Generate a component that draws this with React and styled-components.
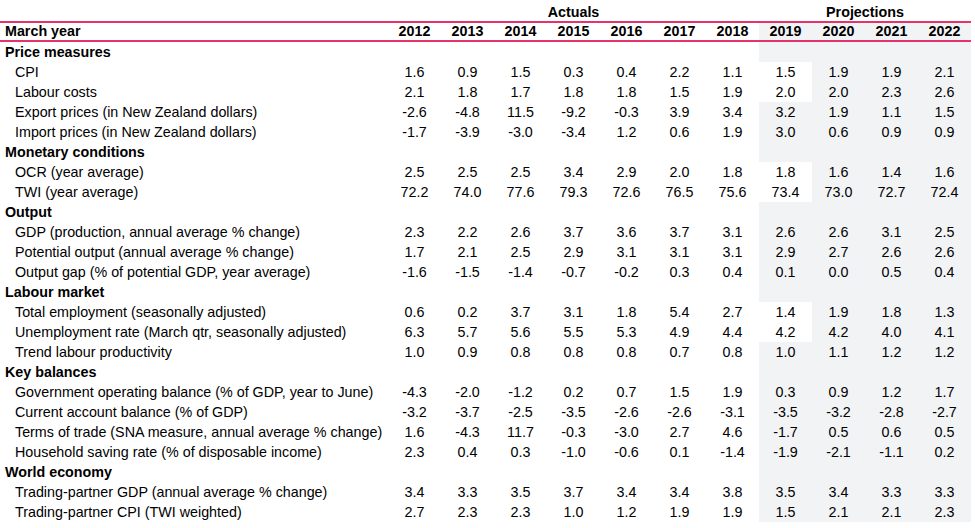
import React from 'react'
import styled, { createGlobalStyle } from 'styled-components'

const GlobalStyle = createGlobalStyle`
  body {
    margin: 0;
    background: #fff;
    color: #000;
    font-family: "Liberation Sans", Arial, sans-serif;
  }
`

const YEARS = [2012, 2013, 2014, 2015, 2016, 2017, 2018, 2019, 2020, 2021, 2022]
const ACTUAL_COUNT = 7

const sections = [
  {
    title: 'Price measures',
    rows: [
      ['CPI', '1.6 0.9 1.5 0.3 0.4 2.2 1.1 1.5 1.9 1.9 2.1', true],
      ['Labour costs', '2.1 1.8 1.7 1.8 1.8 1.5 1.9 2.0 2.0 2.3 2.6', true],
      ['Export prices (in New Zealand dollars)', '-2.6 -4.8 11.5 -9.2 -0.3 3.9 3.4 3.2 1.9 1.1 1.5'],
      ['Import prices (in New Zealand dollars)', '-1.7 -3.9 -3.0 -3.4 1.2 0.6 1.9 3.0 0.6 0.9 0.9'],
    ],
  },
  {
    title: 'Monetary conditions',
    rows: [
      ['OCR (year average)', '2.5 2.5 2.5 3.4 2.9 2.0 1.8 1.8 1.6 1.4 1.6', true],
      ['TWI (year average)', '72.2 74.0 77.6 79.3 72.6 76.5 75.6 73.4 73.0 72.7 72.4', true],
    ],
  },
  {
    title: 'Output',
    rows: [
      ['GDP (production, annual average % change)', '2.3 2.2 2.6 3.7 3.6 3.7 3.1 2.6 2.6 3.1 2.5'],
      ['Potential output (annual average % change)', '1.7 2.1 2.5 2.9 3.1 3.1 3.1 2.9 2.7 2.6 2.6'],
      ['Output gap (% of potential GDP, year average)', '-1.6 -1.5 -1.4 -0.7 -0.2 0.3 0.4 0.1 0.0 0.5 0.4'],
    ],
  },
  {
    title: 'Labour market',
    rows: [
      ['Total employment (seasonally adjusted)', '0.6 0.2 3.7 3.1 1.8 5.4 2.7 1.4 1.9 1.8 1.3', true],
      ['Unemployment rate (March qtr, seasonally adjusted)', '6.3 5.7 5.6 5.5 5.3 4.9 4.4 4.2 4.2 4.0 4.1', true],
      ['Trend labour productivity', '1.0 0.9 0.8 0.8 0.8 0.7 0.8 1.0 1.1 1.2 1.2'],
    ],
  },
  {
    title: 'Key balances',
    rows: [
      ['Government operating balance (% of GDP, year to June)', '-4.3 -2.0 -1.2 0.2 0.7 1.5 1.9 0.3 0.9 1.2 1.7'],
      ['Current account balance (% of GDP)', '-3.2 -3.7 -2.5 -3.5 -2.6 -2.6 -3.1 -3.5 -3.2 -2.8 -2.7'],
      ['Terms of trade (SNA measure, annual average % change)', '1.6 -4.3 11.7 -0.3 -3.0 2.7 4.6 -1.7 0.5 0.6 0.5'],
      ['Household saving rate (% of disposable income)', '2.3 0.4 0.3 -1.0 -0.6 0.1 -1.4 -1.9 -2.1 -1.1 0.2'],
    ],
  },
  {
    title: 'World economy',
    rows: [
      ['Trading-partner GDP (annual average % change)', '3.4 3.3 3.5 3.7 3.4 3.4 3.8 3.5 3.4 3.3 3.3'],
      ['Trading-partner CPI (TWI weighted)', '2.7 2.3 2.3 1.0 1.2 1.9 1.9 1.5 2.1 2.1 2.3'],
    ],
  },
]

const Table = styled.div`
  width: 971px;
  font-size: 14.3px;
`

const Row = styled.div`
  display: grid;
  grid-template-columns: 388px repeat(11, 53px);
  height: 20px;
  line-height: 20px;
  white-space: nowrap;
`

const GroupRow = styled(Row)`
  height: 21px;
  line-height: 24px;
  grid-template-columns: 388px 371px 212px;
  font-weight: 700;
`

const YearRow = styled(Row)`
  box-sizing: border-box;
  height: 21px;
  line-height: 17px;
  border-top: 2px solid #e5336b;
  border-bottom: 2px solid #e5336b;
  font-weight: 700;
`

const GroupTitle = styled.div`
  text-align: center;
`

const Label = styled.div`
  padding-left: ${(p) => (p.$indent ? '15px' : '5px')};
  font-weight: ${(p) => (p.$bold ? 700 : 400)};
`

const Cell = styled.div`
  text-align: center;
  background: ${(p) => (p.$shade ? '#f2f3f5' : 'transparent')};
`

function DataRow({ label, values, white2019 }) {
  const list = values.split(' ')
  return (
    <Row>
      <Label $indent>{label}</Label>
      {list.map((v, i) => (
        <Cell key={i} $shade={i >= ACTUAL_COUNT && !(white2019 && i === ACTUAL_COUNT)}>
          {v}
        </Cell>
      ))}
    </Row>
  )
}

function SectionRow({ title }) {
  return (
    <Row>
      <Label $bold>{title}</Label>
      {YEARS.map((y, i) => (
        <Cell key={y} $shade={i >= ACTUAL_COUNT} />
      ))}
    </Row>
  )
}

export default function App() {
  return (
    <>
      <GlobalStyle />
      <Table>
        <GroupRow>
          <div />
          <GroupTitle>Actuals</GroupTitle>
          <GroupTitle>Projections</GroupTitle>
        </GroupRow>
        <YearRow>
          <Label $bold>March year</Label>
          {YEARS.map((y, i) => (
            <Cell key={y} $shade={i >= ACTUAL_COUNT}>
              {y}
            </Cell>
          ))}
        </YearRow>
        {sections.map((s) => (
          <React.Fragment key={s.title}>
            <SectionRow title={s.title} />
            {s.rows.map(([label, values, white]) => (
              <DataRow key={label} label={label} values={values} white2019={white} />
            ))}
          </React.Fragment>
        ))}
      </Table>
    </>
  )
}
